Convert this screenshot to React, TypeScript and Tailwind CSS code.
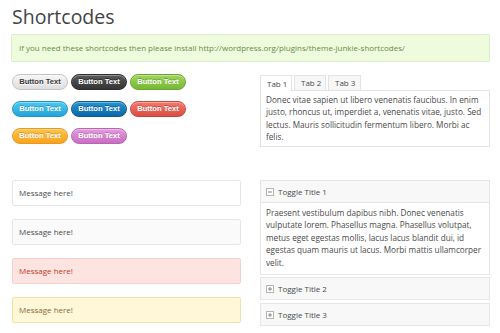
const BUTTONS = [
  [
    { label: "Button Text", cls: "border-[#c4c4c4] bg-gradient-to-b from-[#f6f6f6] to-[#dedede] text-[#3a3a3a] [text-shadow:0_1px_0_#fff]" },
    { label: "Button Text", cls: "border-[#2e2e2e] bg-gradient-to-b from-[#5a5a5a] to-[#353535] text-white [text-shadow:0_-1px_0_rgba(0,0,0,0.5)]" },
    { label: "Button Text", cls: "border-[#6aa62c] bg-gradient-to-b from-[#a0d65a] to-[#77b836] text-white [text-shadow:0_-1px_0_rgba(0,0,0,0.25)]" },
  ],
  [
    { label: "Button Text", cls: "border-[#1f96c8] bg-gradient-to-b from-[#4ccaf0] to-[#24a4da] text-white [text-shadow:0_-1px_0_rgba(0,0,0,0.25)]" },
    { label: "Button Text", cls: "border-[#0b5c93] bg-gradient-to-b from-[#2595d2] to-[#0b68a8] text-white [text-shadow:0_-1px_0_rgba(0,0,0,0.35)]" },
    { label: "Button Text", cls: "border-[#c9473d] bg-gradient-to-b from-[#f27a6e] to-[#db4c41] text-white [text-shadow:0_-1px_0_rgba(0,0,0,0.25)]" },
  ],
  [
    { label: "Button Text", cls: "border-[#e89a1c] bg-gradient-to-b from-[#ffc447] to-[#f9a21c] text-white [text-shadow:0_-1px_0_rgba(0,0,0,0.2)]" },
    { label: "Button Text", cls: "border-[#b866b1] bg-gradient-to-b from-[#e39ade] to-[#c96fc2] text-white [text-shadow:0_-1px_0_rgba(0,0,0,0.2)]" },
  ],
];

const MESSAGES = [
  "border-[#e6e6e6] bg-white text-[#4a4a4a]",
  "border-[#e6e6e6] bg-[#fafafa] text-[#4a4a4a]",
  "border-[#f6d0cc] bg-[#fee4e1] text-[#c0392b]",
  "border-[#f3e1a6] bg-[#fff7d8] text-[#86693a]",
];

function ToggleIcon({ open }: { open: boolean }) {
  return (
    <svg width="8" height="8" viewBox="0 0 8 8" className="shrink-0">
      <rect x="0.5" y="0.5" width="7" height="7" fill="#fff" stroke="#b5b5b5" />
      <path d="M2 4h4" stroke="#888" />
      {!open && <path d="M4 2v4" stroke="#888" />}
    </svg>
  );
}

export default function App() {
  return (
    <div className="h-[333px] w-[500px] overflow-hidden bg-white px-[11px] pt-[5px] font-['Open_Sans',sans-serif] text-[#4a4a4a]">
      <h1 className="ml-[1px] text-[19.5px] leading-[24px] font-normal text-[#444]">Shortcodes</h1>

      <div className="mt-[5px] flex h-[28px] w-[479px] items-center rounded-[2px] border border-[#dbeec6] bg-[#eefbdc] px-[7px] text-[8px] text-[#6a8a4c]">
        If you need these shortcodes then please install http://wordpress.org/plugins/theme-junkie-shortcodes/
      </div>

      {/* buttons + tabs */}
      <div className="mt-[12px] grid grid-cols-[230px_230px] gap-x-[19px]">
        <div className="ml-[1px] flex flex-col gap-[11px]">
          {BUTTONS.map((row, i) => (
            <div key={i} className="flex gap-[3px]">
              {row.map((b, j) => (
                <span
                  key={j}
                  className={`flex h-[16px] w-[56px] items-center justify-center rounded-full border font-['Liberation_Sans',Arial,sans-serif] text-[7.6px] font-bold shadow-[inset_0_1px_0_rgba(255,255,255,0.35)] ${b.cls}`}
                >
                  {b.label}
                </span>
              ))}
            </div>
          ))}
        </div>

        <div className="mt-[1px]">
          <div className="flex gap-[2px]">
            <span className="relative z-10 -mb-px flex h-[16px] w-[32px] items-center border border-b-0 border-[#e3e3e3] bg-white pl-[6px] text-[8px]">Tab 1</span>
            <span className="flex h-[15px] w-[32px] items-center border border-b-0 border-[#e3e3e3] bg-[#f7f7f7] pl-[6px] text-[8px]">Tab 2</span>
            <span className="flex h-[15px] w-[33px] items-center border border-b-0 border-[#e3e3e3] bg-[#f7f7f7] pl-[6px] text-[8px]">Tab 3</span>
          </div>
          <div className="h-[57px] border border-[#e3e3e3] px-[5px] pt-[3px] text-[8.2px] leading-[12.4px]">
            Donec vitae sapien ut libero venenatis faucibus. In enim justo, rhoncus ut, imperdiet a, venenatis vitae, justo. Sed lectus. Mauris sollicitudin fermentum libero. Morbi ac felis.
          </div>
        </div>
      </div>

      {/* messages + toggles */}
      <div className="mt-[33px] grid grid-cols-[230px_230px] gap-x-[19px]">
        <div className="ml-[1px] flex flex-col gap-[13px]">
          {MESSAGES.map((m, i) => (
            <div key={i} className={`flex h-[26px] items-center rounded-[2px] border px-[6px] text-[8px] ${m}`}>
              Message here!
            </div>
          ))}
        </div>

        <div className="flex flex-col">
          <div className="border border-[#e6e6e6]">
            <div className="flex h-[22px] items-center gap-[4px] border-b border-[#e6e6e6] bg-[#f8f8f8] pl-[5px] text-[8px]">
              <ToggleIcon open />
              Toggle Title 1
            </div>
            <div className="h-[71px] bg-white px-[5px] pt-[4px] text-[8.2px] leading-[12.4px]">
              Praesent vestibulum dapibus nibh. Donec venenatis vulputate lorem. Phasellus magna. Phasellus volutpat, metus eget egestas mollis, lacus lacus blandit dui, id egestas quam mauris ut lacus. Morbi mattis ullamcorper velit.
            </div>
          </div>
          <div className="mt-[2px] flex h-[23px] items-center gap-[4px] border border-[#e6e6e6] bg-[#f8f8f8] pl-[5px] text-[8px]">
            <ToggleIcon open={false} />
            Toggle Title 2
          </div>
          <div className="mt-[3px] flex h-[23px] items-center gap-[4px] border border-[#e6e6e6] bg-[#f8f8f8] pl-[5px] text-[8px]">
            <ToggleIcon open={false} />
            Toggle Title 3
          </div>
        </div>
      </div>
    </div>
  );
}
